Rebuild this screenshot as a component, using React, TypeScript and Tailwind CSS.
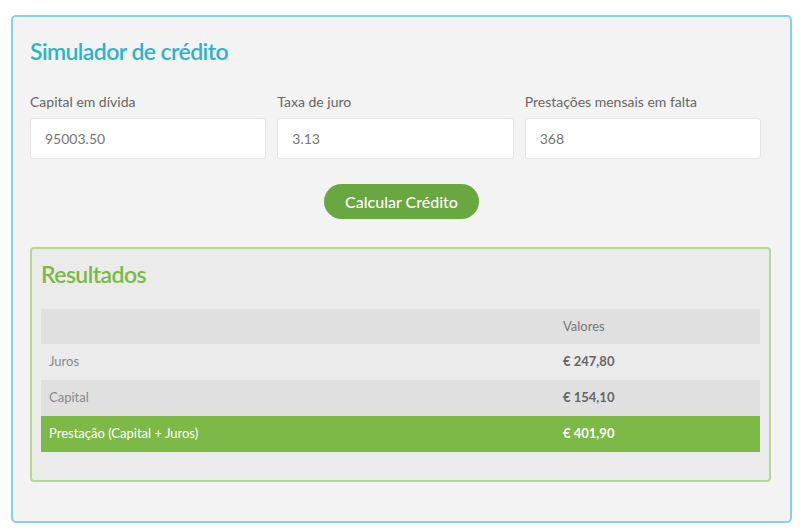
import React, { useState } from 'react';

const fmt = (n: number) =>
    '€ ' + n.toFixed(2).replace('.', ',');

const App: React.FC = () => {
    const [capital, setCapital] = useState('95003.50');
    const [taxa, setTaxa] = useState('3.13');
    const [prazo, setPrazo] = useState('368');

    const rows = [
        { label: 'Juros', value: 247.8 },
        { label: 'Capital', value: 154.1 },
    ];
    const total = 401.9;

    return (
        <div className="w-[800px] h-[531px] bg-white pt-[15px] pl-[11px] font-['Lato',sans-serif]">
            <div className="w-[781px] h-[508px] border-2 border-[#86d3df] rounded-[5px] bg-[#f3f3f3] px-[17px] pt-[21px]">
                <h2 className="text-[23px] leading-[26px] font-semibold text-[#2cb4cc] tracking-tight">
                    Simulador de crédito
                </h2>

                {/* campos */}
                <div className="mt-[30px] w-[731px] grid grid-cols-3 gap-x-[11px]">
                    {[
                        { label: 'Capital em dívida', value: capital, set: setCapital },
                        { label: 'Taxa de juro', value: taxa, set: setTaxa },
                        { label: 'Prestações mensais em falta', value: prazo, set: setPrazo },
                    ].map((f) => (
                        <label key={f.label} className="flex flex-col">
                            <span className="text-[14px] leading-[16px] text-[#666]">{f.label}</span>
                            <input
                                type="text"
                                value={f.value}
                                onChange={(e) => f.set(e.target.value)}
                                className="mt-[8px] h-[41px] bg-white border border-[#e3e3e3] rounded-[3px] px-[14px] text-[14px] text-[#777] outline-none"
                            />
                        </label>
                    ))}
                </div>

                <div className="flex justify-center mt-[25px]">
                    <button className="w-[155px] h-[35px] rounded-full bg-[#69a740] text-white text-[16px] font-medium">
                        Calcular Crédito
                    </button>
                </div>

                {/* resultados */}
                <div className="mt-[28px] w-[741px] h-[235px] border-2 border-[#b0da94] rounded-[4px] bg-[#ebebeb] px-[9px] pt-[12px]">
                    <h3 className="text-[23px] leading-[26px] font-semibold text-[#79b944] tracking-tight">
                        Resultados
                    </h3>
                    <table className="mt-[22px] w-full text-[13px] border-collapse">
                        <thead>
                            <tr className="bg-[#e0e0e0] h-[35px]">
                                <th className="w-[514px]"></th>
                                <th className="text-left font-normal text-[#777] px-[8px]">Valores</th>
                            </tr>
                        </thead>
                        <tbody>
                            {rows.map((r, i) => (
                                <tr key={r.label} className={`h-[36px] ${i % 2 === 1 ? 'bg-[#e0e0e0]' : ''}`}>
                                    <td className="px-[8px] text-[#888]">{r.label}</td>
                                    <td className="px-[8px] font-bold text-[#666]">{fmt(r.value)}</td>
                                </tr>
                            ))}
                            <tr className="h-[36px] bg-[#7cb946] text-white">
                                <td className="px-[8px]">Prestação (Capital + Juros)</td>
                                <td className="px-[8px] font-bold">{fmt(total)}</td>
                            </tr>
                        </tbody>
                    </table>
                </div>
            </div>
        </div>
    );
};

export default App;
